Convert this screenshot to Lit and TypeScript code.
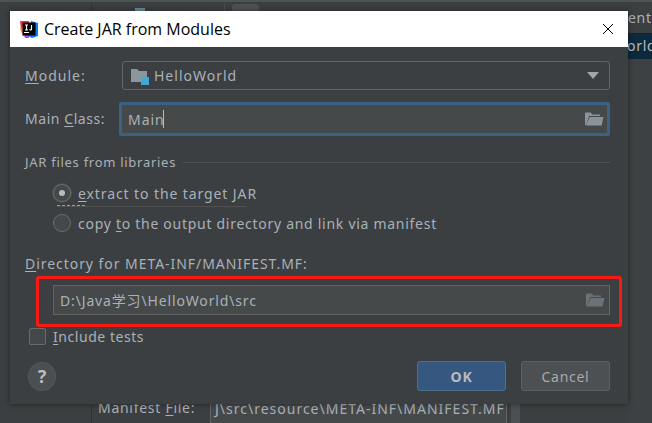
import { LitElement, html, css, svg } from "lit";
import { customElement } from "lit/decorators.js";

const folderOpen = (c: string) => svg`<svg width="20" height="16" viewBox="0 0 20 16"><path fill="${c}" d="M1 14V2.6C1 2 1.4 1.5 2 1.5h4.6L8.4 3.6H16V5H5.2L2 14z"/><path fill="${c}" d="M5.8 6H19.5L17.6 14.5H1.8z"/></svg>`;

@customElement("app-root")
export class AppRoot extends LitElement {
  static styles = css`
    :host { display: block; width: 652px; height: 423px; overflow: hidden; position: relative; background: #3c3f41;
      font-family: "Noto Sans", "Noto Sans CJK SC", sans-serif; font-size: 14px; color: #a9b1b8; letter-spacing: .72px; }
    u { text-underline-offset: 2px; }
    .bg-top { position: absolute; left: 0; top: 0; width: 652px; height: 2px; background: #505354; }
    .bg-top2 { position: absolute; left: 91px; top: 2px; width: 561px; height: 31px; background: #3c3f41; border-left: 1px solid #323232; }
    .tab { position: absolute; left: 232px; top: 4px; width: 27px; height: 7px; background: #4e5254; border-radius: 3px 3px 0 0; }
    .tick { position: absolute; left: 224px; top: 4px; width: 1px; height: 7px; background: #515151; }
    .glyph { position: absolute; left: 135px; top: 8px; width: 10px; height: 3px; background: #6d8a94; }
    .bg-left { position: absolute; left: 91px; top: 33px; width: 1px; height: 390px; background: #323232; }
    .bg-text { position: absolute; left: 628px; top: 8px; color: #a9b1b8; }
    .bg-sel { position: absolute; left: 628px; top: 33px; width: 24px; height: 26px; background: #0d293e; color: #bbb; line-height: 26px; overflow: hidden; }
    .bg-sel span { margin-left: -1px; }
    .bg-right { position: absolute; left: 628px; top: 59px; width: 24px; height: 364px; background: #3e4143; }
    .mf { position: absolute; left: 98px; top: 398px; color: #a9b1b8; white-space: nowrap; }
    .mff { position: absolute; left: 210px; top: 398px; width: 297px; height: 25px; box-sizing: border-box; padding: 0 0 0 4px; border: 1px solid #646464; border-bottom: 0; background: #45494a; color: #a9b1b8; white-space: nowrap; overflow: hidden; line-height: 20px; letter-spacing: 1px; }
    .bar { position: absolute; left: 511px; top: 398px; width: 9px; height: 25px; background: #4d5052; }

    .dialog { position: absolute; left: 10px; top: 11px; width: 618px; height: 393px; background: #3c3f41; box-shadow: 0 0 6px rgba(0,0,0,.45); display: flex; flex-direction: column; }
    .title { height: 36px; background: #fff; color: #000; display: flex; align-items: center; padding: 0 0 0 9px; gap: 5px; font-family: "Open Sans", sans-serif; font-size: 16px; letter-spacing: 0; flex: none; }
    .title .t { flex: 1; }
    .x { margin-right: 14px; display: block; }
    .body { flex: 1; padding: 14px 18px 0 15px; display: flex; flex-direction: column; }
    .row { display: flex; align-items: center; }
    .lab { width: 97px; flex: none; letter-spacing: 1px; }
    .combo { width: 488px; height: 29px; box-sizing: border-box; border: 1px solid #646464; border-radius: 3px; display: flex; align-items: center; padding: 0 10px 0 7px; gap: 5px; background: #3c3f41; }
    .combo .n { flex: 1; letter-spacing: 1px; }
    .main-row { margin-top: 12px; }
    .main-lab { width: 94px; flex: none; letter-spacing: .55px; position: relative; top: -1px; }
    .focus { width: 493px; height: 34px; box-sizing: border-box; border: 3px solid #3d6185; border-radius: 2px; background: #45494a; display: flex; align-items: center; padding: 0 3px 0 6px; }
    .focus .n { flex: 1; display: flex; align-items: center; letter-spacing: .95px; }
    .caret { width: 1px; height: 18px; background: #bbb; margin-left: -2px; }
    .sep { display: flex; align-items: center; gap: 7px; margin-top: 16px; height: 20px; }
    .sep span { font-size: 13px; }
    .sep i { flex: 1; height: 1px; background: #515151; }
    .radios { display: flex; flex-direction: column; padding-left: 28px; margin-top: 6px; position: relative; }
    .radio { height: 30px; display: flex; align-items: center; gap: 7px; }
    .wide { letter-spacing: .9px; }
    .dot { width: 18px; height: 18px; border-radius: 50%; box-sizing: border-box; border: 1px solid #6b6b6b; background: #43494a; display: flex; align-items: center; justify-content: center; }
    .dot.on { box-shadow: 0 0 0 1px #4d5052; }
    .dot b { width: 6px; height: 6px; border-radius: 50%; background: #bbb; }
    .ghost { position: absolute; left: 32px; top: 28px; width: 189px; height: 1px; background: #515151; }
    .ghost::before { content: ""; position: absolute; left: 0; top: -1px; width: 30px; height: 1px; background: repeating-linear-gradient(90deg, #9a9fa3 0 3px, transparent 3px 5px); }
    .dir { margin-top: 15px; height: 20px; display: flex; align-items: center; letter-spacing: .95px; }
    .path { margin: 12px 0 0 28px; width: 557px; height: 30px; box-sizing: border-box; border: 1px solid #646464; background: #45494a; display: flex; align-items: center; padding: 0 4px 0 6px; }
    .path .n { flex: 1; letter-spacing: .85px; }
    .red { position: absolute; left: 26px; top: 265px; width: 586px; height: 51px; box-sizing: border-box; border: 3px solid #fb1a12; border-radius: 3px; }
    .check { display: flex; align-items: center; gap: 7px; margin: 11px 0 0 4px; height: 20px; letter-spacing: .55px; }
    .box { width: 17px; height: 17px; box-sizing: border-box; border: 1px solid #6b6b6b; border-radius: 2px; background: #43494a; }
    .foot { display: flex; align-items: center; margin: 15px 0 0 3px; }
    .help { width: 28px; height: 29px; border-radius: 50%; box-sizing: border-box; border: 1px solid #555; background: #4b4f51; color: #bbb; font-weight: 700; font-size: 18px; display: flex; align-items: center; justify-content: center; letter-spacing: 0; }
    .sp { flex: 1; }
    .btn { height: 30px; box-sizing: border-box; border-radius: 3px; display: flex; align-items: center; justify-content: center; }
    .ok { width: 89px; background: #365880; border: 1px solid #4c708c; color: #bbbbbb; font-weight: 700; }
    .cancel { width: 89px; margin-left: 15px; background: #4c5052; border: 1px solid #5e6060; color: #a9a9a9; }
  `;

  render() {
    return html`
      <div class="bg-top"></div><div class="bg-top2"></div><div class="tab"></div><div class="tick"></div><div class="glyph"></div><div class="bg-left"></div>
      <div class="bg-right"></div>
      <div class="bg-text">ent</div>
      <div class="bg-sel"><span>orld</span></div>
      <div class="mf">Manifest <u>F</u>ile:</div>
      <div class="mff">J\\src\\resource\\META-INF\\MANIFEST.MF</div>
      <div class="bar"></div>
      <div class="dialog">
        <div class="title">
          <svg width="20" height="20" viewBox="0 0 20 20">
            <path fill="#fe2857" d="M1 2h9v6H4v3H2z"/>
            <path fill="#fc801d" d="M1 9l3-1 3 8-3 1z"/>
            <path fill="#b345f1" d="M4 13h6v6H6z"/>
            <path fill="#087cfa" d="M12 2l7 2v13l-6 2-4-2z"/>
            <rect x="3.5" y="3.5" width="13" height="13" fill="#000"/>
            <rect x="5" y="13" width="5" height="1" fill="#fff"/>
            <path fill="none" stroke="#fff" stroke-width="1.2" d="M6 6h3M7.5 6v5M6 11h3M12.5 6v4.2c0 .8-1.6 1-2 .3"/>
          </svg>
          <span class="t">Create JAR from Modules</span>
          <svg class="x" width="12" height="12" viewBox="0 0 12 12"><path d="M1 1l10 10M11 1L1 11" stroke="#000" stroke-width="1" fill="none"/></svg>
        </div>
        <div class="body">
          <div class="row">
            <div class="lab"><u>M</u>odule:</div>
            <div class="combo">
              <svg width="19" height="18" viewBox="0 0 19 18"><path fill="#8c979d" d="M1 2h6l2 2h8v11H1z"/><rect x="11" y="10" width="8" height="8" fill="#3ea9d8"/></svg>
              <span class="n">HelloWorld</span>
              <svg width="12" height="7" viewBox="0 0 12 7"><path fill="#a3a8ab" d="M0 0h12L6 7z"/></svg>
            </div>
          </div>
          <div class="row main-row">
            <div class="main-lab">Main <u>C</u>lass:</div>
            <div class="focus"><span class="n">Main<span class="caret"></span></span>${folderOpen("#8b9498")}</div>
          </div>
          <div class="sep"><span>JAR files from libraries</span><i></i></div>
          <div class="radios">
            <div class="radio"><span class="dot on"><b></b></span><span class="wide"><u>e</u>xtract to the target JAR</span></div>
            <div class="radio"><span class="dot"></span><span>copy <u>t</u>o the output directory and link via manifest</span></div>
            <div class="ghost"></div>
          </div>
          <div class="dir"><span><u>D</u>irectory for META-INF/MANIFEST.MF:</span></div>
          <div class="path"><span class="n">D:\\Java学习\\HelloWorld\\src</span>${folderOpen("#6b7275")}</div>
          <div class="check"><span class="box"></span><span><u>I</u>nclude tests</span></div>
          <div class="foot">
            <div class="help">?</div><div class="sp"></div>
            <div class="btn ok">OK</div><div class="btn cancel">Cancel</div>
          </div>
        </div>
        <div class="red"></div>
      </div>
    `;
  }
}
